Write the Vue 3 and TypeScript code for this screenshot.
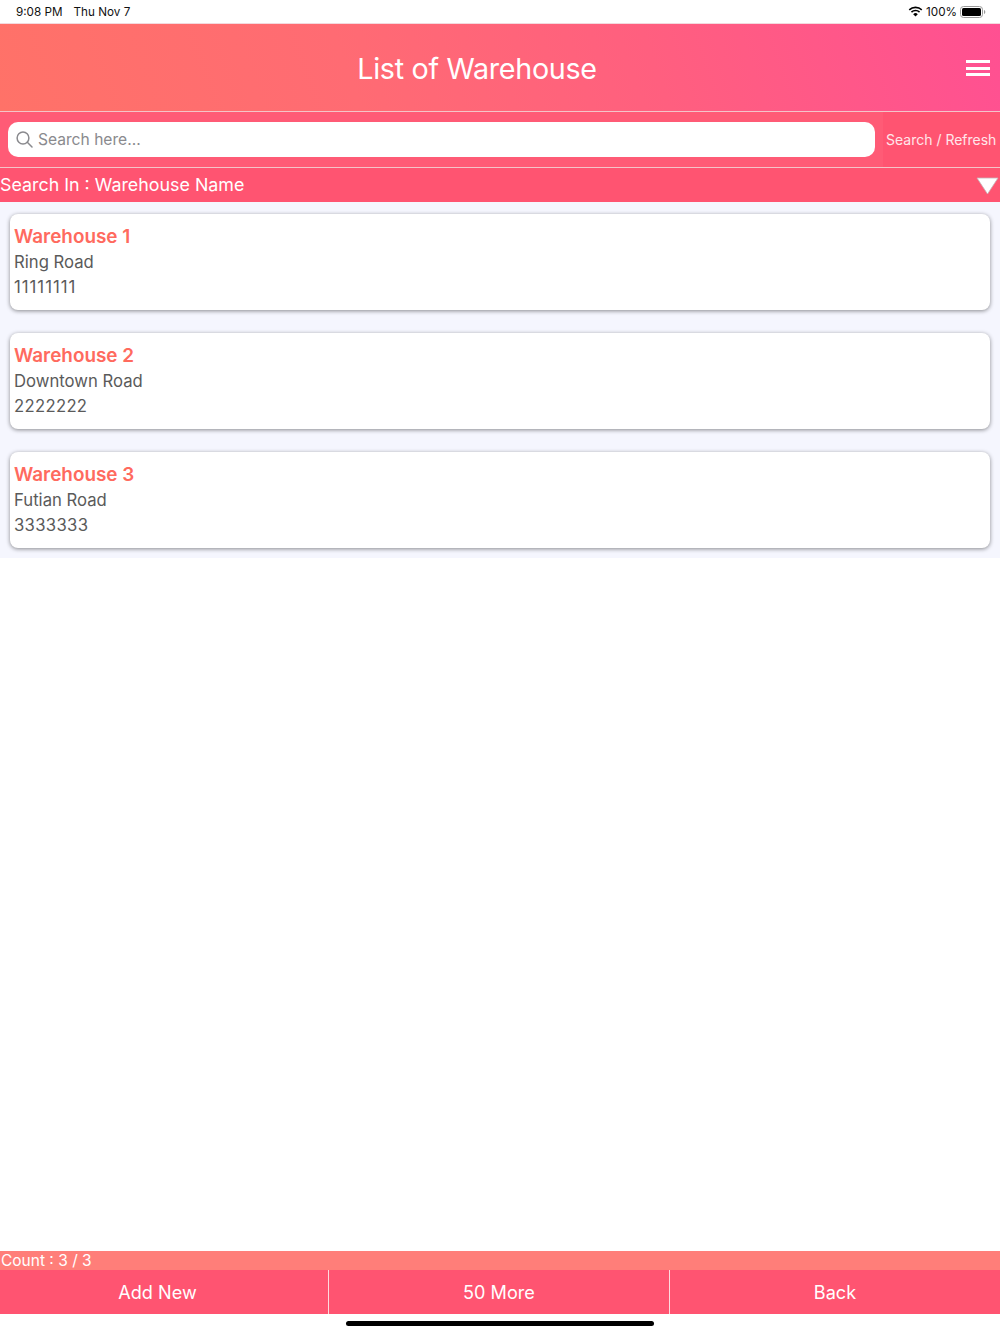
<script setup lang="ts">
interface Warehouse { name: string; road: string; phone: string; narrow: boolean }
const warehouses: Warehouse[] = [
  { name: 'Warehouse 1', road: 'Ring Road', phone: '11111111', narrow: true },
  { name: 'Warehouse 2', road: 'Downtown Road', phone: '2222222', narrow: false },
  { name: 'Warehouse 3', road: 'Futian Road', phone: '3333333', narrow: false },
]
</script>

<template>
  <div class="page">
    <div class="status">
      <div class="status-left"><span>9:08 PM</span><span>Thu Nov 7</span></div>
      <div class="status-right">
        <svg width="15" height="11" viewBox="0 0 15 11"><path d="M7.5 2.2c2.2 0 4.2.9 5.7 2.3l1.1-1.2A9.9 9.9 0 0 0 7.5.6 9.900 9.900 0 0 0 .7 3.300l1.100 1.200A8.300 8.300 0 0 1 7.500 2.200Z" fill="#000"/><path d="M7.500 5.300c1.300 0 2.500.5 3.500 1.400l1.100-1.200a6.700 6.700 0 0 0-9.200 0L4 6.700a5.100 5.100 0 0 1 3.500-1.400Z" fill="#000"/><path d="M7.500 10.600 9.800 8.200a3.300 3.300 0 0 0-4.600 0Z" fill="#000"/></svg>
        <span>100%</span>
        <svg width="26" height="12" viewBox="0 0 26 12"><rect x=".5" y=".5" width="22" height="11" rx="3" fill="none" stroke="#9a9a9a"/><rect x="2" y="2" width="19" height="8" rx="1.500" fill="#000"/><path d="M24 4v4c.8-.3 1.300-1.100 1.300-2S24.800 4.300 24 4Z" fill="#9a9a9a"/></svg>
      </div>
    </div>

    <header class="header">
      <h1 class="title">List of Warehouse</h1>
      <div class="menu"><i></i><i></i><i></i></div>
    </header>

    <div class="search-row">
      <div class="search-wrap">
        <div class="search-box">
          <svg width="17" height="17" viewBox="0 0 17 17" fill="none" stroke="#8a8a8e" stroke-width="1.500"><circle cx="7" cy="7" r="5.900"/><path d="M11.300 11.300 16 16" stroke-linecap="round"/></svg>
          <span>Search here...</span>
        </div>
      </div>
      <div class="search-btn">Search / Refresh</div>
    </div>

    <div class="search-in">
      <span>Search In : Warehouse Name</span>
      <svg class="caret" width="23" height="18" viewBox="0 0 23 18"><path d="M1 1h21L11.500 17Z" fill="#fff" stroke="#c4b4b8" stroke-width=".8"/></svg>
    </div>

    <main class="list">
      <article v-for="w in warehouses" :key="w.name" class="card">
        <div class="name">{{ w.name }}</div>
        <div class="line">{{ w.road }}</div>
        <div class="line phone" :class="{ spaced: w.narrow }">{{ w.phone }}</div>
      </article>
    </main>

    <div class="spacer"></div>

    <div class="count">Count : 3 / 3</div>
    <nav class="actions">
      <div class="action a1">Add New</div>
      <div class="action a2">50 More</div>
      <div class="action a3">Back</div>
    </nav>
    <div class="home"><div class="home-bar"></div></div>
  </div>
</template>

<style>
html, body { margin: 0; background: #fff; }
</style>

<style scoped>
.page {
  width: 1000px;
  height: 1334px;
  display: flex;
  flex-direction: column;
  font-family: Inter, "Liberation Sans", sans-serif;
  background: #fff;
  overflow: hidden;
}
.status {
  height: 23px;
  border-bottom: 1px solid #f3d9de;
  display: flex;
  justify-content: space-between;
  align-items: center;
  padding: 0 14px 0 16px;
  font-size: 11.700px;
  color: #111;
}
.status-left { display: flex; gap: 11px; }
.status-right { display: flex; align-items: center; gap: 3px; }
.header {
  height: 87px;
  background: linear-gradient(70deg, #ff7268, #ff6b73 35%, #ff5f7f 65%, #ff5092);
  position: relative;
  display: flex;
  align-items: center;
  justify-content: center;
  padding: 2px 46px 0 0;
  box-sizing: border-box;
}
.title {
  margin: 0;
  font-size: 28.700px;
  font-weight: 400;
  color: #fff;
  letter-spacing: -0.300px;
}
.menu {
  position: absolute;
  right: 10px;
  top: 36px;
  width: 24px;
  display: flex;
  flex-direction: column;
  gap: 3.500px;
}
.menu i { display: block; height: 3px; background: #fff; }
.search-row {
  height: 55px;
  border-top: 1px solid #f4c4c8;
  border-bottom: 1px solid #f4c4c8;
  display: flex;
}
.search-wrap {
  flex: 1;
  background: #ff5b76;
  padding: 10px 8px;
  box-sizing: border-box;
}
.search-box {
  height: 35px;
  background: #fff;
  border-radius: 10px;
  display: flex;
  align-items: center;
  gap: 5px;
  padding-left: 8px;
  box-sizing: border-box;
  font-size: 15.600px;
  color: #8a8a8e;
}
.search-btn {
  width: 117px;
  background: #ff5471;
  color: #ffe6ea;
  font-size: 14px;
  display: flex;
  align-items: center;
  padding-left: 3px;
  box-sizing: border-box;
  white-space: nowrap;
}
.search-in {
  height: 34px;
  background: #ff5471;
  color: #fff;
  font-size: 17.850px;
  display: flex;
  align-items: center;
  justify-content: space-between;
}
.search-in > span { margin-top: -2px; }
.caret { margin-right: 1px; margin-top: 2px; }
.list {
  background: #f5f6fe;
  padding: 12px 10px 10px;
  display: flex;
  flex-direction: column;
  gap: 23px;
}
.card {
  height: 96px;
  box-sizing: border-box;
  background: #fff;
  border-radius: 8px;
  box-shadow: 0 1px 4px rgba(0, 0, 0, 0.45);
  padding: 10px 4px 0;
  display: flex;
  flex-direction: column;
}
.name { font-size: 18.900px; font-weight: 600; color: #ff6a5e; line-height: 26px; }
.line { font-size: 16.700px; color: #5a5a5a; line-height: 25px; }
.phone { letter-spacing: 0.300px; }
.spaced { letter-spacing: 1px; }
.spacer { flex: 1; }
.count {
  height: 19px;
  background: #ff7e79;
  color: #fff;
  font-size: 15.500px;
  line-height: 20px;
  padding-left: 1px;
}
.actions {
  height: 44px;
  background: #ff5471;
  display: flex;
  color: #fff;
  font-size: 18.100px;
}
.action {
  display: flex;
  align-items: center;
  justify-content: center;
  box-sizing: border-box;
}
.a1 { width: 329px; border-right: 1px solid #ffd9de; padding-right: 13px; }
.a2 { width: 341px; border-right: 1px solid #ffd9de; }
.a3 { flex: 1; }
.home {
  height: 20px;
  display: flex;
  justify-content: center;
  padding-top: 7px;
  box-sizing: border-box;
}
.home-bar { width: 308px; height: 5px; background: #000; border-radius: 3px; }
</style>
